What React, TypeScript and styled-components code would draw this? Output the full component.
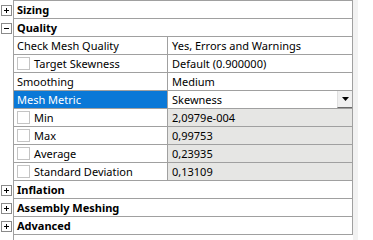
import React from "react";
import styled, { createGlobalStyle } from "styled-components";

const Global = createGlobalStyle`
  html, body { margin: 0; padding: 0; background: #ffffff; }
  body { font-family: "Noto Sans", "Open Sans", sans-serif; }
`;

const Frame = styled.div`
  width: 373px;
  height: 240px;
  overflow: hidden;
  display: flex;
  background: #ffffff;
`;

const Grid = styled.div`
  width: 353px;
  display: flex;
  flex-direction: column;
`;

const Scroll = styled.div`
  width: 5px;
  height: 240px;
  background: #f2f2f2;
`;

const Row = styled.div<{ $h?: number }>`
  display: flex;
  height: ${(p) => p.$h ?? 18}px;
  flex-shrink: 0;
`;

const Gutter = styled.div`
  width: 13px;
  border-right: 1px solid #a0a0a0;
  display: flex;
  align-items: center;
  justify-content: center;
  box-sizing: content-box;
  flex-shrink: 0;
`;

const Body = styled.div`
  flex: 1;
  display: flex;
  border-bottom: 1px solid #a0a0a0;
  border-right: 1px solid #a0a0a0;
`;

const Filler = styled.div`
  flex: 1;
  display: flex;
`;

const NameCell = styled.div<{ $selected?: boolean }>`
  width: 154px;
  box-sizing: border-box;
  border-right: 1px solid #a0a0a0;
  display: flex;
  align-items: center;
  padding-left: 3px;
  background: ${(p) => (p.$selected ? "#0a78d7" : "#ffffff")};
  color: ${(p) => (p.$selected ? "#ffffff" : "#000000")};
  font-size: 11px;
  white-space: nowrap;
`;

const ValueCell = styled.div<{ $readOnly?: boolean }>`
  flex: 1;
  display: flex;
  align-items: center;
  padding-left: 4px;
  background: ${(p) => (p.$readOnly ? "#e6e6e4" : "#ffffff")};
  font-size: 11px;
  color: #000000;
  white-space: nowrap;
  position: relative;
`;

const Category = styled.div`
  flex: 1;
  display: flex;
  align-items: center;
  padding-left: 3px;
  font-size: 11px;
  font-weight: 700;
  color: #000000;
`;

const ExpandBox = styled.div`
  width: 9px;
  height: 9px;
  border: 1px solid #8a8a8a;
  background: #ffffff;
  position: relative;
  margin-left: -1px;
`;

const Bar = styled.span<{ $vertical?: boolean }>`
  position: absolute;
  background: #000000;
  left: ${(p) => (p.$vertical ? 4 : 2)}px;
  top: ${(p) => (p.$vertical ? 2 : 4)}px;
  width: ${(p) => (p.$vertical ? 1 : 5)}px;
  height: ${(p) => (p.$vertical ? 5 : 1)}px;
`;

const Check = styled.span`
  width: 11px;
  height: 11px;
  border: 1px solid #c4c4c4;
  background: #ffffff;
  margin-right: 4px;
  flex-shrink: 0;
`;

const DropButton = styled.div`
  position: absolute;
  right: 0;
  top: 0;
  width: 14px;
  height: 16px;
  background: #f0f0f0;
  border-left: 1px solid #e0e0e0;
  border-bottom: 1px solid #6a6a6a;
  display: flex;
  align-items: center;
  justify-content: center;
`;

type Item =
  | { kind: "cat"; label: string; open?: boolean }
  | { kind: "prop"; name: string; value: string; check?: boolean; selected?: boolean; readOnly?: boolean; drop?: boolean };

const items: Item[] = [
  { kind: "cat", label: "Sizing" },
  { kind: "cat", label: "Quality", open: true },
  { kind: "prop", name: "Check Mesh Quality", value: "Yes, Errors and Warnings" },
  { kind: "prop", name: "Target Skewness", value: "Default (0.900000)", check: true },
  { kind: "prop", name: "Smoothing", value: "Medium" },
  { kind: "prop", name: "Mesh Metric", value: "Skewness", selected: true, drop: true },
  { kind: "prop", name: "Min", value: "2,0979e-004", check: true, readOnly: true },
  { kind: "prop", name: "Max", value: "0,99753", check: true, readOnly: true },
  { kind: "prop", name: "Average", value: "0,23935", check: true, readOnly: true },
  { kind: "prop", name: "Standard Deviation", value: "0,13109", check: true, readOnly: true },
  { kind: "cat", label: "Inflation" },
  { kind: "cat", label: "Assembly Meshing" },
  { kind: "cat", label: "Advanced" },
];

export default function App() {
  return (
    <Frame>
      <Global />
      <Grid>
        <Row $h={1}>
          <Gutter />
          <Body>
            <NameCell />
            <ValueCell />
          </Body>
        </Row>
        {items.map((it, i) =>
          it.kind === "cat" ? (
            <Row key={i}>
              <Gutter>
                <ExpandBox>
                  <Bar />
                  {!it.open && <Bar $vertical />}
                </ExpandBox>
              </Gutter>
              <Body>
                <Category>{it.label}</Category>
              </Body>
            </Row>
          ) : (
            <Row key={i}>
              <Gutter />
              <Body>
                <NameCell $selected={it.selected}>
                  {it.check && <Check />}
                  {it.name}
                </NameCell>
                <ValueCell $readOnly={it.readOnly}>
                  {it.value}
                  {it.drop && (
                    <DropButton>
                      <svg width="7" height="4" viewBox="0 0 7 4">
                        <path d="M0 0 H7 L3.5 4 Z" fill="#000" />
                      </svg>
                    </DropButton>
                  )}
                </ValueCell>
              </Body>
            </Row>
          )
        )}
        <Row $h={10}>
          <Gutter />
          <Filler />
        </Row>
      </Grid>
      <Scroll />
    </Frame>
  );
}
